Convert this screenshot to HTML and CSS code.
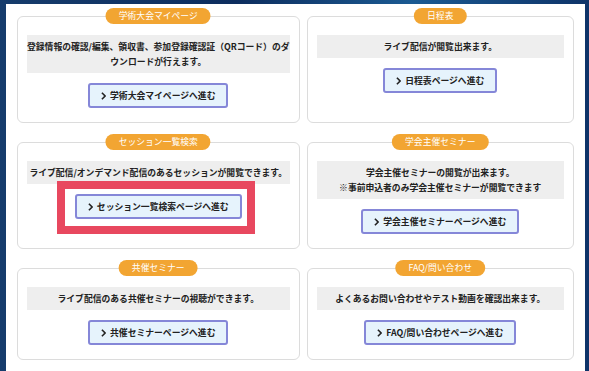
FILE: index.html
```html
<!doctype html>
<html>
<head>
    <meta charset="utf-8">
    <title>メニュー</title>
    <link rel="stylesheet" href="styles.css">
</head>
<body>
<div class="panel">

    <div class="card">
        <span class="badge">学術大会マイページ</span>
        <p class="desc">登録情報の確認/編集、領収書、参加登録確認証（QRコード）のダ<br>ウンロードが行えます。</p>
        <a class="btn" href="#"><svg class="arr" viewBox="0 0 6 10"><polyline points="1,1 5,5 1,9"/></svg>学術大会マイページへ進む</a>
    </div>

    <div class="card">
        <span class="badge">日程表</span>
        <p class="desc">ライブ配信が閲覧出来ます。</p>
        <a class="btn" href="#"><svg class="arr" viewBox="0 0 6 10"><polyline points="1,1 5,5 1,9"/></svg>日程表ページへ進む</a>
    </div>

    <div class="card">
        <span class="badge">セッション一覧検索</span>
        <p class="desc">ライブ配信/オンデマンド配信のあるセッションが閲覧できます。</p>
        <a class="btn" href="#"><svg class="arr" viewBox="0 0 6 10"><polyline points="1,1 5,5 1,9"/></svg>セッション一覧検索ページへ進む</a>
        <div class="mark"></div>
    </div>

    <div class="card">
        <span class="badge">学会主催セミナー</span>
        <p class="desc">学会主催セミナーの閲覧が出来ます。<br>※事前申込者のみ学会主催セミナーが閲覧できます</p>
        <a class="btn" href="#"><svg class="arr" viewBox="0 0 6 10"><polyline points="1,1 5,5 1,9"/></svg>学会主催セミナーページへ進む</a>
    </div>

    <div class="card">
        <span class="badge">共催セミナー</span>
        <p class="desc">ライブ配信のある共催セミナーの視聴ができます。</p>
        <a class="btn" href="#"><svg class="arr" viewBox="0 0 6 10"><polyline points="1,1 5,5 1,9"/></svg>共催セミナーページへ進む</a>
    </div>

    <div class="card">
        <span class="badge">FAQ/問い合わせ</span>
        <p class="desc">よくあるお問い合わせやテスト動画を確認出来ます。</p>
        <a class="btn" href="#"><svg class="arr" viewBox="0 0 6 10"><polyline points="1,1 5,5 1,9"/></svg>FAQ/問い合わせページへ進む</a>
    </div>

</div>
</body>
</html>
```

FILE: styles.css
```css
html {
    background: linear-gradient(90deg, #163c6c 0%, #0d2d5e 40%, #1b5a92 70%, #0e3368 100%);
}

body {
    margin: 4px 4px 0 6px;
    min-height: calc(100vh - 4px);
    background: #fff;
    font-family: "Noto Sans CJK JP", "Noto Sans", sans-serif;
    color: #222;
}

.panel {
    padding: 12px 11px 0;
    display: grid;
    grid-template-columns: 1fr 1fr;
    column-gap: 7px;
    row-gap: 19px;
}

.card {
    position: relative;
    border: 1px solid #dcdcdc;
    border-radius: 6px;
    padding: 18px 9px 14px;
    display: flex;
    flex-direction: column;
    align-items: center;
}

.badge {
    position: absolute;
    top: -9px;
    left: 50%;
    transform: translateX(-50%);
    background: #f2a532;
    color: #fff;
    font-size: 8.8px;
    line-height: 16px;
    height: 16px;
    padding: 0 13px;
    border-radius: 8px;
    white-space: nowrap;
}

.desc {
    margin: 0;
    align-self: stretch;
    background: #eeeeee;
    text-align: center;
    font-size: 8.8px;
    font-weight: bold;
    line-height: 15px;
    padding: 4px 0;
    white-space: nowrap;
}

.btn {
    margin-top: 10px;
    display: flex;
    align-items: center;
    background: #e6f3fc;
    border: 2px solid #8587d8;
    border-radius: 3px;
    padding: 3px 11px;
    line-height: 15px;
    font-size: 8.8px;
    font-weight: bold;
    color: #222;
    text-decoration: none;
    white-space: nowrap;
}

.arr {
    width: 5px;
    height: 8px;
    margin-right: 4px;
    fill: none;
    stroke: #222;
    stroke-width: 2;
}

.mark {
    position: absolute;
    left: 39px;
    top: 38px;
    width: 182px;
    height: 37px;
    border: 8px solid #e8485f;
}
```
